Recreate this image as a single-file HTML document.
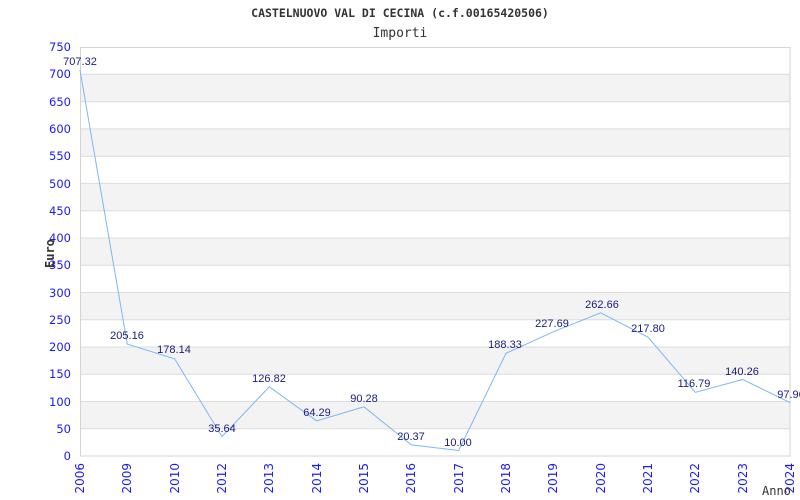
<!DOCTYPE html>
<html><head><meta charset="utf-8"><style>
html,body{margin:0;padding:0;background:#fff;width:800px;height:500px;overflow:hidden}
svg{display:block}
.yl{font-family:"DejaVu Sans","Liberation Sans",sans-serif;font-size:11.5px;fill:#1a1aff;text-anchor:end}
.xl{font-family:"DejaVu Sans","Liberation Sans",sans-serif;font-size:12px;fill:#1a1aff;text-anchor:end}
.dl{font-family:"Liberation Sans",Arial,sans-serif;font-size:11px;fill:#1a1a80;text-anchor:middle}
.mono{font-family:"DejaVu Sans Mono","Liberation Mono",monospace;fill:#333}
</style></head><body>
<svg width="800" height="500" viewBox="0 0 800 500" xmlns="http://www.w3.org/2000/svg">
<text x="400" y="17" class="mono" font-size="11.5" font-weight="bold" text-anchor="middle">CASTELNUOVO VAL DI CECINA (c.f.00165420506)</text>
<text x="400" y="37" class="mono" font-size="13" text-anchor="middle" fill="#444">Importi</text>
<g fill="#f3f3f3">
<rect x="80" y="401.5" width="710" height="27.3"/>
<rect x="80" y="347" width="710" height="27.3"/>
<rect x="80" y="292.5" width="710" height="27.3"/>
<rect x="80" y="238" width="710" height="27.3"/>
<rect x="80" y="183.4" width="710" height="27.3"/>
<rect x="80" y="128.9" width="710" height="27.3"/>
<rect x="80" y="74.3" width="710" height="27.3"/>
</g>
<g stroke="#dcdcdc" stroke-width="1">
<line x1="80" x2="790" y1="428.7" y2="428.7"/><line x1="80" x2="790" y1="401.5" y2="401.5"/>
<line x1="80" x2="790" y1="374.2" y2="374.2"/><line x1="80" x2="790" y1="347" y2="347"/>
<line x1="80" x2="790" y1="319.7" y2="319.7"/><line x1="80" x2="790" y1="292.5" y2="292.5"/>
<line x1="80" x2="790" y1="265.2" y2="265.2"/><line x1="80" x2="790" y1="238" y2="238"/>
<line x1="80" x2="790" y1="210.7" y2="210.7"/><line x1="80" x2="790" y1="183.4" y2="183.4"/>
<line x1="80" x2="790" y1="156.2" y2="156.2"/><line x1="80" x2="790" y1="128.9" y2="128.9"/>
<line x1="80" x2="790" y1="101.7" y2="101.7"/><line x1="80" x2="790" y1="74.3" y2="74.3"/>
</g>
<rect x="80.5" y="47.5" width="709.5" height="408.5" fill="none" stroke="#d4d4d4"/>
<g class="yl">
<text x="71" y="460">0</text><text x="71" y="433">50</text><text x="71" y="406">100</text>
<text x="71" y="378">150</text><text x="71" y="351">200</text><text x="71" y="324">250</text>
<text x="71" y="297">300</text><text x="71" y="269">350</text><text x="71" y="242">400</text>
<text x="71" y="215">450</text><text x="71" y="188">500</text><text x="71" y="160">550</text>
<text x="71" y="133">600</text><text x="71" y="106">650</text><text x="71" y="78">700</text>
<text x="71" y="51">750</text>
</g>
<text transform="translate(54,268) rotate(-90)" class="mono" font-size="12" font-weight="bold">Euro</text>
<polyline fill="none" stroke="#7ab8f5" stroke-width="1" points="80,70.3 127.3,344.1 174.7,358.9 222,436.6 269.3,386.8 316.7,420.9 364,406.8 411.3,444.9 458.7,450.5 506,353.3 553.3,331.8 600.7,312.8 648,337.2 695.3,392.3 742.7,379.5 790,402.6"/>
<g class="dl">
<text x="80" y="65">707.32</text><text x="127" y="339">205.16</text><text x="174" y="353">178.14</text>
<text x="222" y="432">35.64</text><text x="269" y="382">126.82</text><text x="317" y="416">64.29</text>
<text x="364" y="402">90.28</text><text x="411" y="440">20.37</text><text x="458" y="446">10.00</text>
<text x="505" y="348">188.33</text><text x="552" y="327">227.69</text><text x="602" y="308">262.66</text>
<text x="648" y="332">217.80</text><text x="694" y="387">116.79</text><text x="742" y="375">140.26</text>
<text x="791" y="398">97.96</text>
</g>
<g class="xl">
<text transform="translate(84,463) rotate(-90)">2006</text>
<text transform="translate(131,463) rotate(-90)">2009</text>
<text transform="translate(179,463) rotate(-90)">2010</text>
<text transform="translate(226,463) rotate(-90)">2012</text>
<text transform="translate(273,463) rotate(-90)">2013</text>
<text transform="translate(321,463) rotate(-90)">2014</text>
<text transform="translate(368,463) rotate(-90)">2015</text>
<text transform="translate(415,463) rotate(-90)">2016</text>
<text transform="translate(463,463) rotate(-90)">2017</text>
<text transform="translate(510,463) rotate(-90)">2018</text>
<text transform="translate(557,463) rotate(-90)">2019</text>
<text transform="translate(605,463) rotate(-90)">2020</text>
<text transform="translate(652,463) rotate(-90)">2021</text>
<text transform="translate(699,463) rotate(-90)">2022</text>
<text transform="translate(747,463) rotate(-90)">2023</text>
<text transform="translate(794,463) rotate(-90)">2024</text>
</g>
<text x="762" y="495" class="mono" font-size="12" fill="#444">Anno</text>
</svg>
</body></html>
